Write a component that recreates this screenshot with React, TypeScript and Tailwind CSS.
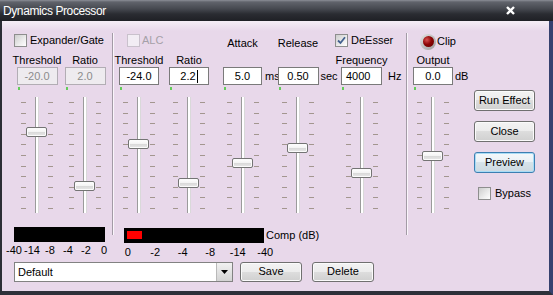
import type { ReactNode } from 'react'

const TICKS = Array.from({ length: 11 }, (_, i) => i)

function Checkbox({ checked = false, disabled = false }: { checked?: boolean; disabled?: boolean }) {
  const box = disabled
    ? 'border-[#c9c1cc] bg-[#f2edf4]'
    : 'border-[#8e8e8e] bg-[linear-gradient(135deg,#cdcdcd,#efefef_65%,#ffffff)]'
  return (
    <div className={`w-[13px] h-[13px] shrink-0 border ${box} flex items-center justify-center`}>
      {checked && (
        <svg width="9" height="9" viewBox="0 0 9 9">
          <path d="M1 4.5 L3.5 7 L8 1.2" fill="none" stroke="#43608f" strokeWidth="1.8" />
        </svg>
      )}
    </div>
  )
}

function TickColumn() {
  return (
    <div className="h-full flex flex-col justify-between pt-[5px] pb-[4px]">
      {TICKS.map((i) => (
        <div key={i} className="w-[5px] h-px bg-[#a3968f]" />
      ))}
    </div>
  )
}

function Slider({ thumb }: { thumb: number }) {
  return (
    <div className="flex h-[116px] mt-[7px]">
      <TickColumn />
      <div className="relative mx-[9px] w-[4px] h-full border-l border-l-[#9b9b9b] border-r border-r-[#d9d9d9] bg-white">
        {/* thumb sits over the track */}
        <div
          className="absolute left-[-10px] w-[21px] h-[10px] rounded-[2px] border border-[#747474] bg-[linear-gradient(to_bottom,#ffffff,#f4f4f4_45%,#dadada_55%,#e9e9e9)] shadow-[inset_0_0_0_1px_#fbfbfb]"
          style={{ top: thumb }}
        />
      </div>
      <TickColumn />
    </div>
  )
}

function ValueBox({
  value,
  width,
  disabled,
  caret,
  left,
}: {
  value: string
  width: string
  disabled?: boolean
  caret?: boolean
  left?: boolean
}) {
  const cls = disabled
    ? 'bg-[#eeebef] border-[#b2adb4] text-[#8c8c8c]'
    : 'bg-white border-[#7a7a7a] text-black'
  return (
    <div
      className={`${width} h-[18px] border ${cls} flex items-center ${left ? 'justify-start pl-[4px]' : 'justify-center'}`}
    >
      <span>{value}</span>
      {caret && <span className="w-px h-[13px] bg-black ml-[1px]" />}
    </div>
  )
}

function SliderColumn({
  width,
  inputWidth = 'w-[41px]',
  top,
  label,
  high,
  value,
  unit,
  unitClass = '',
  disabled,
  caret,
  left,
  thumb,
}: {
  width: string
  inputWidth?: string
  top?: ReactNode
  label: string
  high?: boolean
  value: string
  unit?: string
  unitClass?: string
  disabled?: boolean
  caret?: boolean
  left?: boolean
  thumb: number
}) {
  return (
    <div className={`${width} flex flex-col items-center`}>
      <div className="h-[34px] self-stretch flex flex-col items-center">
        {top && <div className="h-[14px] self-stretch flex">{top}</div>}
        <div className={`leading-[13px] ${high ? 'mt-[4px]' : 'mt-auto'}`}>{label}</div>
      </div>
      <div className="flex">
        <div className="flex flex-col">
          <ValueBox value={value} width={inputWidth} disabled={disabled} caret={caret} left={left} />
          <div className="ml-px mt-[2px] w-[2px] h-[3px] bg-[#63cc5a]" />
        </div>
        {unit && (
          <div className="w-0 shrink-0 h-[18px] flex items-center">
            <span className={`whitespace-nowrap ${unitClass}`}>{unit}</span>
          </div>
        )}
      </div>
      <Slider thumb={thumb} />
    </div>
  )
}

function Button({ children, className = '', preview }: { children: ReactNode; className?: string; preview?: boolean }) {
  const look = preview
    ? 'border-[#3c7fb1] shadow-[inset_0_0_0_1px_#a8dcf6] bg-[linear-gradient(to_bottom,#f4f8fa,#e9f1f6_50%,#d6e3ea_50%,#cdd9e0)]'
    : 'border-[#707070] shadow-[inset_0_0_0_1px_#fbfbfb] bg-[linear-gradient(to_bottom,#f3f3f3,#ececec_50%,#dddddd_50%,#d0d0d0)]'
  return (
    <div className={`rounded-[3px] border ${look} flex items-center justify-center text-black ${className}`}>
      {children}
    </div>
  )
}

const LEFT_SCALE = ['-40', '-14', '-8', '-4', '-2', '0']
const RIGHT_SCALE = ['0', '-2', '-4', '-8', '-14', '-40']

export default function App() {
  return (
    <div className="w-[553px] h-[295px] flex flex-col font-['Liberation_Sans',Arial,sans-serif] text-[11px] text-black bg-[#2a2c33]">
      <div className="h-[21px] shrink-0 flex items-center justify-between pl-[3px] pr-[38px] bg-[linear-gradient(to_bottom,#8b8e97_0px,#60636b_2px,#45484f_9px,#2a2c32_14px,#1f2025_21px)]">
        <span className="text-white text-[12px] tracking-[-0.4px]">Dynamics Processor</span>
        <svg width="9" height="9" viewBox="0 0 9 9">
          <path d="M1 1 L8 8 M8 1 L1 8" stroke="#ffffff" strokeWidth="2.4" />
        </svg>
      </div>

      <div className="flex-1 flex flex-col pl-[11px] pt-[12px] border-l-[2px] border-l-[#2b2d35] border-r-[4px] border-r-[#36416f] border-b-[4px] border-b-[#2e3039] bg-[linear-gradient(to_bottom,#f5eef6,#e8d8ea_10px)]">
        <div className="flex items-start">
          {/* expander / gate */}
          <div className="w-[99px] flex flex-col">
            <div className="flex">
              <SliderColumn
                width="w-[48px]"
                top={
                  <div className="ml-px flex items-center gap-[3px] whitespace-nowrap">
                    <Checkbox />
                    <span>Expander/Gate</span>
                  </div>
                }
                label="Threshold"
                value="-20.0"
                disabled
                thumb={30}
              />
              <SliderColumn width="w-[48px]" label="Ratio" value="2.0" disabled thumb={84} />
            </div>
            <div className="mt-[14px] ml-px w-[91px] h-[15px] bg-black" />
            <div className="mt-[2px] -ml-[8px] w-[108px] flex justify-between leading-[13px]">
              {LEFT_SCALE.map((s) => (
                <span key={s} className="w-[18px] text-center">{s}</span>
              ))}
            </div>
          </div>

          <div className="w-[2px] h-[202px] border-l border-l-[#a39ba6] border-r border-r-[#faf5fb]" />

          {/* compressor */}
          <div className="w-[292px] flex flex-col">
            <div className="flex">
              <SliderColumn
                width="w-[50px]"
                inputWidth="w-[40px]"
                top={
                  <div className="ml-[13px] flex items-center gap-[2px] whitespace-nowrap text-[#a5a0a8]">
                    <Checkbox disabled />
                    <span>ALC</span>
                  </div>
                }
                label="Threshold"
                value="-24.0"
                thumb={42}
              />
              <SliderColumn width="w-[50px]" inputWidth="w-[40px]" label="Ratio" value="2.2" caret thumb={81} />
              <SliderColumn
                width="w-[57px]"
                inputWidth="w-[39px]"
                high
                label="Attack"
                value="5.0"
                unit="ms"
                unitClass="ml-[3px]"
                thumb={61}
              />
              <SliderColumn
                width="w-[54px]"
                high
                label="Release"
                value="0.50"
                unit="sec"
                unitClass="ml-[2px]"
                thumb={46}
              />
              <SliderColumn
                width="w-[73px]"
                top={
                  <div className="ml-[10px] flex items-center gap-[3px] whitespace-nowrap">
                    <Checkbox checked />
                    <span>DeEsser</span>
                  </div>
                }
                label="Frequency"
                value="4000"
                left
                unit="Hz"
                unitClass="ml-[6px]"
                thumb={71}
              />
            </div>
            <div className="mt-[14px] flex items-center">
              <div className="ml-[10px] w-[140px] h-[15px] bg-black pt-[3px] pl-[3px]">
                <div className="w-[15px] h-[8px] bg-[#ff0000]" />
              </div>
              <span className="ml-[2px]">Comp (dB)</span>
            </div>
            <div className="mt-[2px] w-[165px] flex justify-between leading-[13px]">
              {RIGHT_SCALE.map((s) => (
                <span key={s} className="w-[28px] text-center">{s}</span>
              ))}
            </div>
          </div>

          <div className="w-[2px] h-[202px] border-l border-l-[#a39ba6] border-r border-r-[#faf5fb]" />

          {/* output + actions */}
          <div className="flex">
            <SliderColumn
              width="w-[50px]"
              inputWidth="w-[40px]"
              top={
                <div className="ml-[12px] mt-[3px] flex items-center gap-px whitespace-nowrap">
                  <div className="w-[16px] h-[16px] rounded-full bg-[linear-gradient(135deg,#e4e4e4,#9a9a9a)] flex items-center justify-center">
                    <div className="w-[11px] h-[11px] rounded-full bg-[radial-gradient(circle_at_35%_35%,#d85050,#8e0505_45%,#5c0000)]" />
                  </div>
                  <span>Clip</span>
                </div>
              }
              label="Output"
              value="0.0"
              unit="dB"
              unitClass="ml-[2px]"
              thumb={54}
            />
            <div className="ml-[16px] mt-[57px] flex flex-col">
              <Button className="w-[61px] h-[21px]">Run Effect</Button>
              <Button className="w-[61px] h-[21px] mt-[10px]">Close</Button>
              <Button className="w-[61px] h-[21px] mt-[10px]" preview>Preview</Button>
              <div className="mt-[12px] ml-[4px] flex items-center gap-[4px]">
                <Checkbox />
                <span>Bypass</span>
              </div>
            </div>
          </div>
        </div>

        {/* preset row */}
        <div className="mt-[3px] flex items-center">
          <div className="ml-px w-[219px] h-[20px] border border-[#828282] bg-white flex">
            <span className="flex-1 pl-[3px] leading-[18px]">Default</span>
            <div className="w-[16px] h-full border-l border-[#b9b9b9] bg-[linear-gradient(to_bottom,#f2f2f2,#e2e2e2_50%,#d3d3d3)] flex items-center justify-center">
              <svg width="7" height="4" viewBox="0 0 7 4">
                <path d="M0 0 L7 0 L3.5 4 Z" fill="#000000" />
              </svg>
            </div>
          </div>
          <Button className="ml-[7px] w-[62px] h-[20px]">Save</Button>
          <Button className="ml-[10px] w-[62px] h-[20px]">Delete</Button>
        </div>
      </div>
    </div>
  )
}
